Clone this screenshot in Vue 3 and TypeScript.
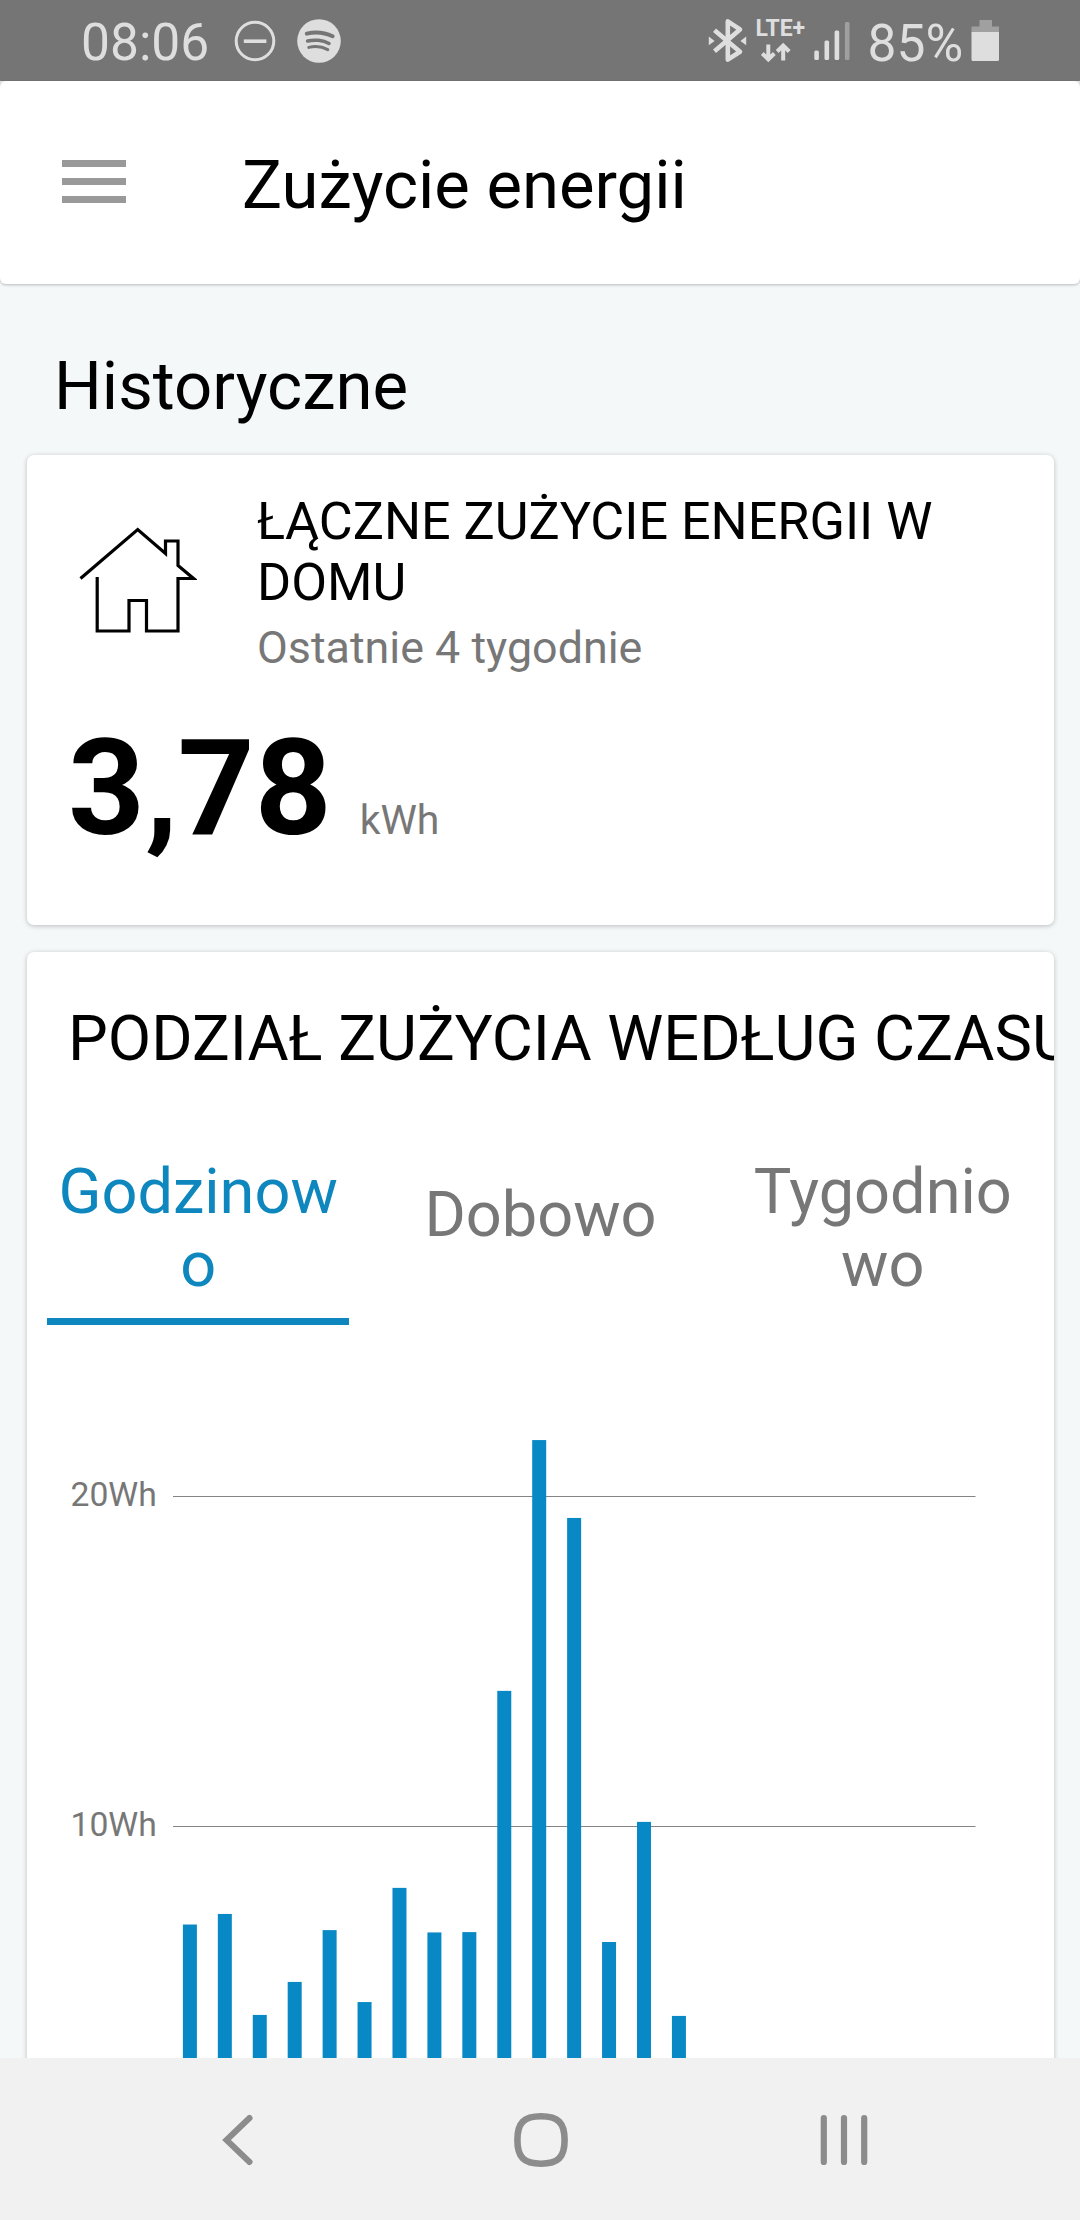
<script setup lang="ts">
interface Tab {
  label: string
  active: boolean
  single: boolean
}

interface Tick {
  label: string
  value: number
}

const tabs: Tab[] = [
  { label: 'Godzinowo', active: true, single: false },
  { label: 'Dobowo', active: false, single: true },
  { label: 'Tygodniowo', active: false, single: false },
]

const PX_PER_WH = 33
const BASELINE = 756.5
const ticks: Tick[] = [
  { label: '20Wh', value: 20 },
  { label: '10Wh', value: 10 },
]

// Hourly consumption in Wh
const hours: number[] = [
  7.03, 7.35, 4.29, 5.29, 6.86, 4.68, 8.14, 6.79, 6.8, 14.11, 21.71, 19.35, 6.5, 10.14, 4.26,
]

const barX = (i: number): number => 155.9 + i * 34.93
const yOf = (wh: number): number => BASELINE - wh * PX_PER_WH
</script>

<template>
  <div class="screen">
    <header class="status">
      <div class="status-left">
        <span class="clock">08:06</span>
        <svg class="dnd" width="42" height="42" viewBox="0 0 42 42">
          <circle cx="21" cy="21" r="18.8" fill="none" stroke="#dedede" stroke-width="3" />
          <path d="M9.8 21.2h22.6" stroke="#dedede" stroke-width="3.6" />
        </svg>
        <svg class="spotify" width="44" height="44" viewBox="0 0 44 44">
          <circle cx="22" cy="22" r="21.8" fill="#dedede" />
          <g fill="none" stroke="#757575" stroke-linecap="round">
            <path d="M9.8 14.6C18 12.6 28 13.6 35.6 17.2" stroke-width="4" />
            <path d="M10.600 22C17 20.400 26 21 32 24.400" stroke-width="3.500" />
            <path d="M11.800 28.400C18 27 25 27.600 30.800 30.600" stroke-width="3" />
          </g>
        </svg>
      </div>
      <svg class="status-right" width="294" height="81" viewBox="706 0 294 81">
        <path d="M714.500 30.200 740 51.800 727.800 59.600V21.400L740 29.400 714.500 51.200" fill="none" stroke="#dedede" stroke-width="4.600" stroke-linejoin="round" />
        <path d="M708.800 36.500v8.800l5.800-4.400zM746.200 36.500v8.800l-5.800-4.400z" fill="#dedede" />
        <text class="lte" x="755.500" y="36">LTE+</text>
        <g fill="none" stroke="#dedede" stroke-width="4">
          <path d="M768.300 44.500v14M762.300 53.500l6 6 6-6" />
          <path d="M783.200 60.500v-14M777.200 51.500l6-6 6 6" />
        </g>
        <g fill="#dedede">
          <rect x="814.300" y="50.500" width="4.600" height="9.500" rx="1.500" />
          <rect x="824.500" y="40.500" width="4.600" height="19.500" rx="1.500" />
          <rect x="834.600" y="30.500" width="4.600" height="29.500" rx="1.500" />
          <rect x="844.900" y="22" width="4.600" height="38" rx="1.500" fill="#a0a0a0" />
        </g>
        <text class="percent" x="867.500" y="60.500">85%</text>
        <path d="M979.500 20h12.500v6.500h7V33h-27.500v-6.500h8z" fill="#a0a0a0" />
        <path d="M971.500 32H999v27.500q0 1.500-1.500 1.500h-24.500q-1.500 0-1.500-1.500z" fill="#dedede" />
      </svg>
    </header>

    <div class="appbar-wrap">
      <div class="appbar">
        <div class="menu"><i></i><i></i><i></i></div>
        <h1 class="title">Zużycie energii</h1>
      </div>
    </div>

    <main class="content">
      <h2 class="section">Historyczne</h2>

      <section class="card total">
        <div class="total-head">
          <svg class="house" width="118" height="110" viewBox="79 525 118 110">
            <path d="M80.500 578.500 137.700 529.500 165.500 553.500V541H178V565.500L193.500 578.500H178V631H146.500V600.500H129V631H97.200V577" fill="none" stroke="#000" stroke-width="3.200" />
          </svg>
          <div class="total-text">
            <div class="total-title">ŁĄCZNE ZUŻYCIE ENERGII W DOMU</div>
            <div class="total-sub">Ostatnie 4 tygodnie</div>
          </div>
        </div>
        <div class="reading">
          <span class="value">3,78</span>
          <span class="unit">kWh</span>
        </div>
      </section>

      <section class="card split">
        <div class="split-title">PODZIAŁ ZUŻYCIA WEDŁUG CZASU</div>
        <div class="tabs">
          <div
            v-for="tab in tabs"
            :key="tab.label"
            class="tab"
            :class="{ active: tab.active, single: tab.single }"
          >
            <span>{{ tab.label }}</span>
          </div>
        </div>
        <svg class="chart" width="1027" height="658" viewBox="0 0 1027 658">
          <g v-for="tick in ticks" :key="tick.label">
            <text class="tick" x="43.500" :y="yOf(tick.value) + 9.500">{{ tick.label }}</text>
            <line x1="146" x2="948.500" :y1="yOf(tick.value)" :y2="yOf(tick.value)" stroke="#858585" />
          </g>
          <rect
            v-for="(wh, i) in hours"
            :key="i"
            :x="barX(i)"
            :y="yOf(wh)"
            width="14"
            :height="wh * PX_PER_WH"
            fill="#0889c6"
          />
        </svg>
      </section>
    </main>

    <nav class="navbar">
      <svg width="40" height="60" viewBox="0 0 40 60">
        <path d="M31.500 8 8.500 30 31.500 52" fill="none" stroke="#8c8c8c" stroke-width="6" stroke-linecap="round" />
      </svg>
      <svg class="home" width="60" height="60" viewBox="0 0 60 60">
        <path d="M30 6.300C47 6.300 53.600 12.500 53.600 30S47 53.700 30 53.700 6.400 47.500 6.400 30 13 6.300 30 6.300z" fill="none" stroke="#8c8c8c" stroke-width="6.600" />
      </svg>
      <svg width="60" height="60" viewBox="0 0 60 60">
        <path d="M9.800 8v44M30 8v44M50.200 8v44" stroke="#8c8c8c" stroke-width="6.200" stroke-linecap="round" />
      </svg>
    </nav>
  </div>
</template>

<style>
body {
  margin: 0;
}
</style>

<style scoped>
.screen {
  width: 1080px;
  height: 2220px;
  display: flex;
  flex-direction: column;
  overflow: hidden;
  background: #f4f8f8;
  font-family: Roboto, sans-serif;
  color: #000;
}

.status {
  flex: none;
  height: 81px;
  box-sizing: border-box;
  padding: 0 80px 0 81px;
  display: flex;
  align-items: center;
  justify-content: space-between;
  background: #757575;
  color: #dedede;
}

.status-left {
  display: flex;
  align-items: center;
}

.clock {
  width: 153px;
  padding-top: 4px;
  font-size: 51.5px;
  line-height: 60px;
}

.spotify {
  margin-left: 21px;
}

.status-right {
  flex: none;
}

.lte {
  font-size: 23px;
  font-weight: 700;
  fill: #dedede;
}

.percent {
  font-size: 51.5px;
  fill: #dedede;
}

.appbar-wrap {
  flex: none;
  background: linear-gradient(#e8e8e8 50%, #f4f8f8 50%);
}

.appbar {
  height: 203px;
  box-sizing: border-box;
  padding-left: 62px;
  display: flex;
  align-items: center;
  background: #fff;
  border-radius: 6px;
  box-shadow: 0 1px 3px rgba(0, 0, 0, 0.25);
}

.menu {
  width: 64px;
  margin-bottom: 2px;
  display: flex;
  flex-direction: column;
  gap: 11px;
}

.menu i {
  height: 7px;
  background: #999;
}

.title {
  margin: 5px 0 0 116px;
  font-size: 67px;
  font-weight: 400;
  line-height: 78px;
}

.content {
  flex: 1;
  min-height: 0;
  padding: 0 26px 0 27px;
  display: flex;
  flex-direction: column;
  overflow: hidden;
}

.section {
  flex: none;
  margin: 63px 0 30px 27px;
  height: 78px;
  font-size: 67.1px;
  font-weight: 400;
  line-height: 78px;
}

.card {
  flex: none;
  box-sizing: border-box;
  background: #fff;
  border-radius: 7px;
  box-shadow: 0 1px 5px rgba(0, 0, 0, 0.24);
}

.total {
  height: 470px;
}

.total-head {
  display: flex;
  padding-top: 35px;
}

.house {
  margin: 35px 0 0 52px;
}

.total-text {
  width: 720px;
  margin-left: 60px;
  padding-top: 1px;
}

.total-title {
  font-size: 52.1px;
  line-height: 61px;
}

.total-sub {
  margin-top: 8px;
  font-size: 44.8px;
  line-height: 53px;
  color: #777;
}

.reading {
  display: flex;
  align-items: baseline;
  margin: 36px 0 0 41px;
  line-height: 157px;
}

.value {
  font-size: 134px;
  font-weight: 700;
}

.unit {
  margin-left: 28px;
  font-size: 41px;
  color: #777;
}

.split {
  height: 1150px;
  margin-top: 27px;
  overflow: hidden;
  display: flex;
  flex-direction: column;
}

.split-title {
  flex: none;
  margin: 49px 0 0 41px;
  font-size: 63.1px;
  line-height: 74px;
  white-space: nowrap;
}

.tabs {
  flex: none;
  display: flex;
  margin-top: 66px;
  height: 184px;
}

.tab {
  flex: 1;
  min-width: 0;
  margin: 0 20px;
  box-sizing: border-box;
  padding-bottom: 3px;
  border-bottom: 7px solid transparent;
  display: flex;
  align-items: center;
  justify-content: center;
  text-align: center;
  font-size: 63.1px;
  line-height: 73.4px;
  color: #777;
}

.tab span {
  min-width: 0;
  padding: 0 8px;
  overflow-wrap: anywhere;
}

.tab.single {
  padding-bottom: 29px;
}

.tab.active {
  color: #0e86be;
  border-bottom-color: #0e86be;
}

.chart {
  flex: none;
  display: block;
  margin-top: 75px;
}

.tick {
  font-size: 33.7px;
  fill: #777;
}

.navbar {
  flex: none;
  height: 162px;
  box-sizing: border-box;
  padding: 2px 206px 0 218px;
  display: flex;
  align-items: center;
  justify-content: space-between;
  background: #f1f1f1;
}

.home {
  margin-left: 10px;
}
</style>
